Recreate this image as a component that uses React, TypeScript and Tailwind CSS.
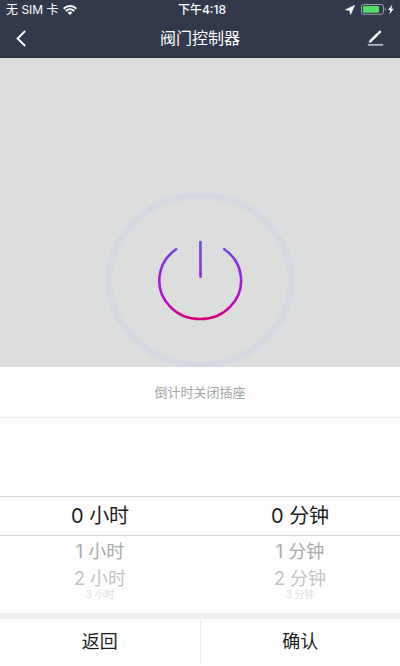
import React, { useState } from 'react'

interface WheelProps {
  label: string
  unit: string
  max: number
  value: number
  onChange: (value: number) => void
}

const rowStyles = [
  'box-content h-[38px] border-y border-[#dcdedd] text-xl text-[#202221]',
  'h-8 text-lg text-[#a9abaa]',
  'h-[22px] text-lg text-[#c2c4c3]',
  'h-2 text-[10px] text-[#e0e2e1]'
]

// 滚轮：选中行在中间，下面的行逐渐变小变淡
const Wheel: React.FC<WheelProps> = ({ label, unit, max, value, onChange }) => {
  const rows = [0, 1, 2, 3].map((offset) => value + offset).filter((n) => n <= max)

  return (
    <div role="group" aria-label={label} className="flex flex-1 flex-col">
      {rows.map((n, index) => (
        <button
          key={n}
          type="button"
          onClick={() => onChange(n)}
          className={`flex items-center justify-center ${rowStyles[index]}`}
        >
          {n} {unit}
        </button>
      ))}
    </div>
  )
}

const StatusBar: React.FC = () => (
  <div className="grid h-[19px] grid-cols-3 items-center px-1.5 text-xs">
    <div className="flex items-center gap-1 whitespace-nowrap">
      <span>无 SIM 卡</span>
      <svg width="14" height="10" viewBox="0 0 14 10" fill="none" stroke="currentColor">
        <path d="M0.6 3.7C4.1 0.2 9.9 0.2 13.4 3.7" strokeWidth="2" />
        <path d="M2.8 6C5.2 3.7 8.8 3.7 11.2 6" strokeWidth="1.9" />
        <path d="M4.6 7.5C6 6.3 8 6.3 9.4 7.5L7 9.9Z" fill="currentColor" stroke="none" />
      </svg>
    </div>
    <span className="pl-1 text-center font-medium">下午4:18</span>
    <div className="flex items-center justify-end gap-1.5">
      <svg width="10" height="10" viewBox="0 0 10 10" fill="currentColor">
        <path d="M9.8 0.2L5.6 9.8L4.6 5.6L0.2 4.8Z" stroke="currentColor" strokeWidth="0.4" />
      </svg>
      <svg width="33" height="11" viewBox="0 0 33 11">
        <rect x="0.5" y="0.5" width="22" height="9.8" rx="2.2" fill="none" stroke="#9aa0ab" />
        <rect x="2" y="2" width="16" height="6.8" rx="0.8" fill="#53dc69" />
        <path d="M23.8 3.6C25.2 4.1 25.2 6.6 23.8 7.1Z" fill="#9aa0ab" />
        <path d="M31.4 0.6L27 6H29.4L28.2 10.4L32.8 4.7H30.3Z" fill="currentColor" />
      </svg>
    </div>
  </div>
)

const App: React.FC = () => {
  const [hours, setHours] = useState(0)
  const [minutes, setMinutes] = useState(0)

  const reset = () => {
    setHours(0)
    setMinutes(0)
  }

  return (
    <div className="flex min-h-screen flex-col bg-[#fdfefd] font-[Inter,'Noto_Sans_CJK_SC',sans-serif]">
      <header className="border-b border-[#29303f] bg-[#31394b] text-white">
        <StatusBar />
        <div className="flex h-[38px] items-center justify-between px-4">
          <button type="button" aria-label="后退" className="flex w-5 justify-start">
            <svg width="10" height="17" viewBox="0 0 10 17" fill="none" stroke="currentColor" strokeWidth="1.9">
              <path d="M9.2 1L1.6 8.5L9.2 16" />
            </svg>
          </button>
          <h1 className="text-base leading-6">阀门控制器</h1>
          <button type="button" aria-label="编辑" className="flex w-5 justify-end">
            <svg width="17" height="16" viewBox="0 0 17 16" fill="none" stroke="currentColor">
              <path d="M4 10.6L11 3.8" strokeWidth="2.6" />
              <path d="M12 2.8L12.9 2" strokeWidth="2.6" strokeLinecap="round" />
              <path d="M1.6 12.8L2.9 9.4L5.2 11.9Z" fill="currentColor" stroke="none" />
              <path d="M0.8 14.9H16.2" strokeWidth="1.1" />
            </svg>
          </button>
        </div>
      </header>

      {/* 开关区域 */}
      <main className="flex flex-1 basis-0 justify-center overflow-hidden bg-[#dcdddd] pt-[134px]">
        <button type="button" aria-label="开关" className="h-[177px] shrink-0">
          <svg width="190" height="177" viewBox="0 0 190 177" fill="none">
            <defs>
              <linearGradient id="power" gradientUnits="userSpaceOnUse" x1="0" y1="49" x2="0" y2="128">
                <stop offset="0" stopColor="#6a50dd" />
                <stop offset="0.5" stopColor="#9c1fdc" />
                <stop offset="0.75" stopColor="#b80bcb" />
                <stop offset="1" stopColor="#d6007c" />
              </linearGradient>
            </defs>
            <ellipse cx="95" cy="88.2" rx="91" ry="84.8" stroke="#d4d8e0" strokeWidth="6.5" />
            <g stroke="url(#power)" strokeWidth="2.6" strokeLinecap="round">
              <path d="M71.2 57.2A40.9 38.6 0 1 0 119.2 57.2" />
              <path d="M95.4 50L95.5 84.6" />
            </g>
          </svg>
        </button>
      </main>

      {/* 倒计时设置 */}
      <section>
        <h2 className="border-b border-[#eff1f1] py-[15px] text-center text-[13px] leading-5 text-[#a3a5a4]">
          倒计时关闭插座
        </h2>
        <div className="flex pt-[78px] pb-[15px]">
          <Wheel label="小时" unit="小时" max={23} value={hours} onChange={setHours} />
          <Wheel label="分钟" unit="分钟" max={59} value={minutes} onChange={setMinutes} />
        </div>
      </section>

      <footer className="flex border-t-[6px] border-[#eff0f0] pb-0.5 text-lg text-[#1d1f1e]">
        <button type="button" onClick={reset} className="h-[45px] flex-1 border-r border-[#eff1f1]">
          返回
        </button>
        <button type="button" className="h-[45px] flex-1">
          确认
        </button>
      </footer>
    </div>
  )
}

export default App
